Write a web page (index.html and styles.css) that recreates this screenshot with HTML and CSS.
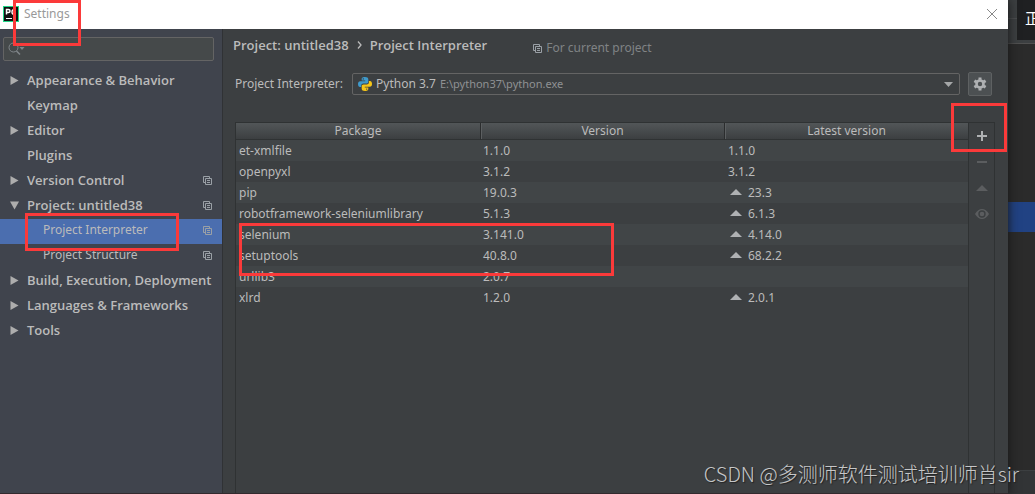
FILE: index.html
```html
<!DOCTYPE html>
<html lang="en">
<head>
<meta charset="utf-8">
<title>Settings</title>
<link rel="stylesheet" href="styles.css">
</head>
<body>
<svg width="0" height="0" class="defs" aria-hidden="true">
  <symbol id="copy" viewBox="0 0 9 9"><path d="M2 6.500H.5V.5H6.500V2M2.500 2.500H8.500V8.500H2.500ZM4 4.500H7M4 6.500H7" fill="none" stroke="currentColor"/></symbol>
  <symbol id="right" viewBox="0 0 8 9"><path d="M0 0L8 4.500L0 9Z" fill="currentColor"/></symbol>
  <symbol id="down" viewBox="0 0 9 8"><path d="M0 0H9L4.500 8Z" fill="currentColor"/></symbol>
  <symbol id="up" viewBox="0 0 12 6"><path d="M0 6L6 0L12 6Z" fill="currentColor"/></symbol>
</svg>
<div class="screen">
  <section class="dialog">
    <header class="titlebar">
      <svg class="logo" viewBox="0 0 16 16"><rect width="16" height="16" fill="#21d789"/><rect x="1" y="1" width="14" height="14" fill="#111"/><path d="M3.500 8.500V3.500H5.500Q7 3.500 7 5T5.500 6.500H3.500M12.500 4.500Q9 2.500 9 6T12.500 7.500" fill="none" stroke="#fff" stroke-width="1.500"/><path d="M3 12.500H9" stroke="#fff"/></svg>
      <h1 class="title">Settings</h1>
      <button class="close" aria-label="Close"><svg width="12" height="12" viewBox="0 0 12 12"><path d="M1 1L11 11M11 1L1 11" stroke="#888" fill="none"/></svg></button>
    </header>
    <div class="content">
      <nav class="sidebar">
        <div class="search">
          <svg class="search-icon" width="17" height="14" viewBox="0 0 17 14"><circle cx="5.500" cy="5.500" r="4.500" fill="none" stroke="#80868a"/><path d="M8.500 9L12 12.500" stroke="#80868a" stroke-width="1.500"/><path d="M11.500 5H16.500L14 8Z" fill="#80868a"/></svg>
          <input class="search-input" type="text" aria-label="Search settings">
        </div>
        <ul class="tree">
          <li class="node"><svg class="arrow"><use href="#right"/></svg><span class="name">Appearance &amp; Behavior</span></li>
          <li class="node"><span class="arrow"></span><span class="name">Keymap</span></li>
          <li class="node"><svg class="arrow"><use href="#right"/></svg><span class="name">Editor</span></li>
          <li class="node"><span class="arrow"></span><span class="name">Plugins</span></li>
          <li class="node"><svg class="arrow"><use href="#right"/></svg><span class="name">Version Control</span><svg class="copy"><use href="#copy"/></svg></li>
          <li class="node"><svg class="arrow"><use href="#down"/></svg><span class="name">Project: untitled38</span><svg class="copy"><use href="#copy"/></svg></li>
          <li class="node child selected"><span class="name">Project Interpreter</span><svg class="copy"><use href="#copy"/></svg></li>
          <li class="node child"><span class="name">Project Structure</span><svg class="copy"><use href="#copy"/></svg></li>
          <li class="node"><svg class="arrow"><use href="#right"/></svg><span class="name">Build, Execution, Deployment</span></li>
          <li class="node"><svg class="arrow"><use href="#right"/></svg><span class="name">Languages &amp; Frameworks</span></li>
          <li class="node"><svg class="arrow"><use href="#right"/></svg><span class="name">Tools</span></li>
        </ul>
      </nav>
      <main class="main">
        <div class="crumbs">
          <span>Project: untitled38</span>
          <svg width="5" height="8" viewBox="0 0 5 8"><path d="M1 0.500L4 4L1 7.500" fill="none" stroke="#bbb" stroke-width="1.300"/></svg>
          <span>Project Interpreter</span>
          <span class="scope"><svg class="copy"><use href="#copy"/></svg>For current project</span>
        </div>
        <div class="interpreter">
          <span class="label" id="interp">Project Interpreter:</span>
          <button class="combo" aria-labelledby="interp">
            <svg width="14" height="14" viewBox="0 0 14 14"><path d="M7 0C4 0 3.700 1 3.700 2.200V3.500H7.200V4.200H2.200C.8 4.200 0 5.300 0 7S.8 10 2 10H3.200V8.500C3.200 7.300 4.200 6.500 5.300 6.500H8.500C9.600 6.500 10.300 5.700 10.300 4.700V2.200C10.300.7 9 0 7 0Z" fill="#3f9acb"/><path d="M7 14C10 14 10.300 13 10.300 11.800V10.500H6.800V9.800H11.800C13.200 9.800 14 8.700 14 7S13.200 4 12 4H10.900V5.500C10.900 6.700 9.800 7.500 8.700 7.500H5.500C4.400 7.500 3.700 8.300 3.700 9.300V11.800C3.700 13.300 5 14 7 14Z" fill="#f5c518"/><circle cx="5.300" cy="1.900" r=".7" fill="#3c3f41"/><circle cx="8.700" cy="12.100" r=".7" fill="#3c3f41"/></svg>
            <span>Python 3.7</span><span class="path">E:\python37\python.exe</span>
            <svg class="caret" viewBox="0 0 9 5"><path d="M0 0H9L4.500 5Z" fill="#a5a7a8"/></svg>
          </button>
          <button class="gear" aria-label="Interpreter options"><svg width="14" height="14" viewBox="0 0 14 14"><path d="M7 2.700V.5M7 11.300V13.500M3.300 4.900L1.400 3.800M10.700 9.100L12.600 10.200M3.300 9.100L1.400 10.200M10.700 4.900L12.600 3.800" stroke="#afb1b3" stroke-width="3"/><circle cx="7" cy="7" r="3.500" fill="none" stroke="#afb1b3" stroke-width="2.600"/></svg></button>
        </div>
        <div class="packages">
          <div class="list">
            <table class="table">
              <thead><tr><th>Package</th><th>Version</th><th>Latest version</th></tr></thead>
              <tbody>
                <tr><td>et-xmlfile</td><td>1.1.0</td><td>1.1.0</td></tr>
                <tr><td>openpyxl</td><td>3.1.2</td><td>3.1.2</td></tr>
                <tr><td>pip</td><td>19.0.3</td><td><svg class="newer"><use href="#up"/></svg>23.3</td></tr>
                <tr><td>robotframework-seleniumlibrary</td><td>5.1.3</td><td><svg class="newer"><use href="#up"/></svg>6.1.3</td></tr>
                <tr><td>selenium</td><td>3.141.0</td><td><svg class="newer"><use href="#up"/></svg>4.14.0</td></tr>
                <tr><td>setuptools</td><td>40.8.0</td><td><svg class="newer"><use href="#up"/></svg>68.2.2</td></tr>
                <tr><td>urllib3</td><td>2.0.7</td><td></td></tr>
                <tr><td>xlrd</td><td>1.2.0</td><td><svg class="newer"><use href="#up"/></svg>2.0.1</td></tr>
              </tbody>
            </table>
          </div>
          <div class="tools">
            <button class="tool add" aria-label="Install"><svg width="10" height="10" viewBox="0 0 10 10"><path d="M5 0V10M0 5H10" stroke="currentColor" stroke-width="2"/></svg></button>
            <button class="tool" aria-label="Uninstall"><svg width="10" height="2" viewBox="0 0 10 2"><path d="M0 1H10" stroke="currentColor" stroke-width="2"/></svg></button>
            <button class="tool" aria-label="Upgrade"><svg width="12" height="6"><use href="#up"/></svg></button>
            <button class="tool" aria-label="Show early releases"><svg width="14" height="10" viewBox="0 0 14 10"><path d="M0 5Q3 0 7 0T14 5Q11 10 7 10T0 5Z" fill="currentColor"/><circle cx="7" cy="5" r="3" fill="none" stroke="#3c3f41" stroke-width="1.400"/></svg></button>
          </div>
        </div>
      </main>
    </div>
  </section>
  <aside class="backdrop"><div class="ime">正</div><div class="highlight"></div><div class="status"></div></aside>
  <div class="mark mark-title"></div>
  <div class="mark mark-nav"></div>
  <div class="mark mark-rows"></div>
  <div class="mark mark-add"></div>
  <div class="watermark">CSDN @多测师软件测试培训师肖sir</div>
</div>
</body>
</html>
```
FILE: styles.css
```css
* { box-sizing: border-box; }
body {
  margin: 0;
  font: 12px/20px "Noto Sans", "Open Sans", sans-serif;
  color: #bbbbbb;
  background: #2b2b2b;
}
button, input { font: inherit; color: inherit; padding: 0; margin: 0; border: 0; background: none; }
svg { flex: none; display: block; }
.defs { position: absolute; }
.screen {
  position: relative;
  display: grid;
  grid-template-columns: minmax(0, 1fr) 27px;
  min-height: 100vh;
  overflow: hidden;
}
.dialog {
  display: flex;
  flex-direction: column;
  background: #3c3f41;
  border-bottom: 1px solid #332a2e;
  box-shadow: 0 0 10px #151515;
  z-index: 1;
}
.titlebar {
  display: flex;
  align-items: center;
  gap: 5px;
  height: 29px;
  padding: 0 10px 2px 3px;
  background: #ffffff;
}
.logo { width: 16px; height: 16px; }
.title { flex: 1; margin: 0; font-size: 12px; font-weight: 400; color: #999999; }
.content { flex: 1; display: grid; grid-template-columns: 223px minmax(0, 1fr); }

.sidebar { background: #40444d; border-right: 1px solid #303235; padding-top: 8px; }
.search {
  display: flex;
  align-items: center;
  gap: 4px;
  height: 24px;
  margin: 0 8px 8px 3px;
  padding: 0 4px;
  border: 1px solid #646464;
  border-radius: 2px;
  background: #45494a;
}
.search-input { flex: 1; min-width: 0; outline: 0; }
.tree { list-style: none; margin: 0; padding: 0; font-family: "Open Sans", "Noto Sans", sans-serif; font-size: 13px; font-weight: 600; }
.node { display: flex; align-items: center; height: 25px; padding: 0 10px 3px 10px; }
.arrow { width: 9px; height: 9px; margin-right: 8px; color: #adadad; }
.name { flex: 1; white-space: nowrap; }
.child { padding-left: 43px; font-family: "Noto Sans", "Open Sans", sans-serif; font-size: 12px; font-weight: 400; }
.selected { background: #4b6eaf; }
.copy { width: 9px; height: 9px; color: #9aa0a6; }

.main { display: flex; flex-direction: column; min-width: 0; padding: 6px 13px 0 12px; }
.crumbs { display: flex; align-items: center; gap: 8px; height: 20px; margin-left: -2px; font-family: "Open Sans", "Noto Sans", sans-serif; font-size: 13px; font-weight: 600; white-space: nowrap; }
.scope { display: flex; align-items: center; gap: 4px; margin-left: 38px; padding-top: 6px; font-family: "Noto Sans", "Open Sans", sans-serif; font-size: 12px; font-weight: 400; color: #808385; }
.interpreter { display: flex; align-items: center; gap: 8px; margin-top: 17px; }
.label { width: 109px; white-space: nowrap; }
.combo {
  flex: 1;
  display: flex;
  align-items: center;
  gap: 4px;
  height: 22px;
  padding: 0 6px 0 5px;
  border: 1px solid #646464;
  border-radius: 2px;
}
.path { color: #8f9193; font-size: 11px; }
.caret { width: 9px; height: 5px; margin-left: auto; }
.gear {
  display: grid;
  place-items: center;
  width: 24px;
  height: 24px;
  margin-right: 3px;
  border: 1px solid #5e6162;
  border-radius: 2px;
  background: #4c5052;
}
.packages { flex: 1; display: grid; grid-template-columns: minmax(0, 1fr) 26px; margin-top: 26px; }
.list { border: 1px solid #2f3233; border-bottom: 0; }
.table { width: 100%; table-layout: fixed; border-collapse: separate; border-spacing: 0; }
.table th {
  height: 17px;
  padding: 0;
  line-height: 16px;
  font-weight: 400;
  background: linear-gradient(#525658, #3c3f41);
  border-bottom: 1px solid #2f3233;
}
.table th + th { border-left: 1px solid #2b2d2e; box-shadow: inset 1px 0 #5c5f61; }
.table td { height: 21px; padding: 0 3px; line-height: 21px; white-space: nowrap; }
.table td:last-child { padding-left: 4px; }
.table tbody tr:nth-child(odd) { background: #414547; }
.newer { display: inline-block; width: 12px; height: 6px; margin: 0 6px 2px 2px; color: #afb1b3; }
.tools { display: flex; flex-direction: column; border: 1px solid #2f3233; border-width: 1px 1px 0 0; color: #5b5d5f; }
.tool { display: grid; place-items: center; height: 26px; }
.add { color: #afb1b3; }

.backdrop { position: relative; display: grid; grid-template-rows: 44px 158px 30px 1fr 24px; }
.backdrop::before { content: ""; grid-area: 1 / 1; background: linear-gradient(#3c3f41 18px, #4b4d4f 18px 19px, #3c3f41 19px 43px, #505050 43px); }
.ime {
  grid-area: 1 / 1;
  height: 40px;
  margin-left: 9px;
  padding-left: 8px;
  overflow: hidden;
  font: 15px/36px "Noto Sans CJK SC", sans-serif;
  color: #ffffff;
  background: #1f2022;
}
.highlight { grid-row: 3; background: #214283; }
.status { grid-row: 5; background: #323436; border-top: 1px solid #3c3f41; }

.mark { position: absolute; z-index: 2; border: 3px solid #fb3a3a; pointer-events: none; }
.mark-title { left: 13px; top: 0; width: 68px; height: 46px; }
.mark-nav { left: 25px; top: 213px; width: 154px; height: 38px; }
.mark-rows { left: 239px; top: 223px; width: 375px; height: 53px; }
.mark-add { right: 28px; top: 103px; width: 56px; height: 49px; }
.watermark {
  position: absolute;
  z-index: 3;
  right: 16px;
  bottom: 6px;
  font: 20px/28px "Noto Sans CJK SC", sans-serif;
  font-weight: 300;
  color: #c6c7c8;
  text-shadow: 1px 1px 1px #222222;
  white-space: nowrap;
}
```
